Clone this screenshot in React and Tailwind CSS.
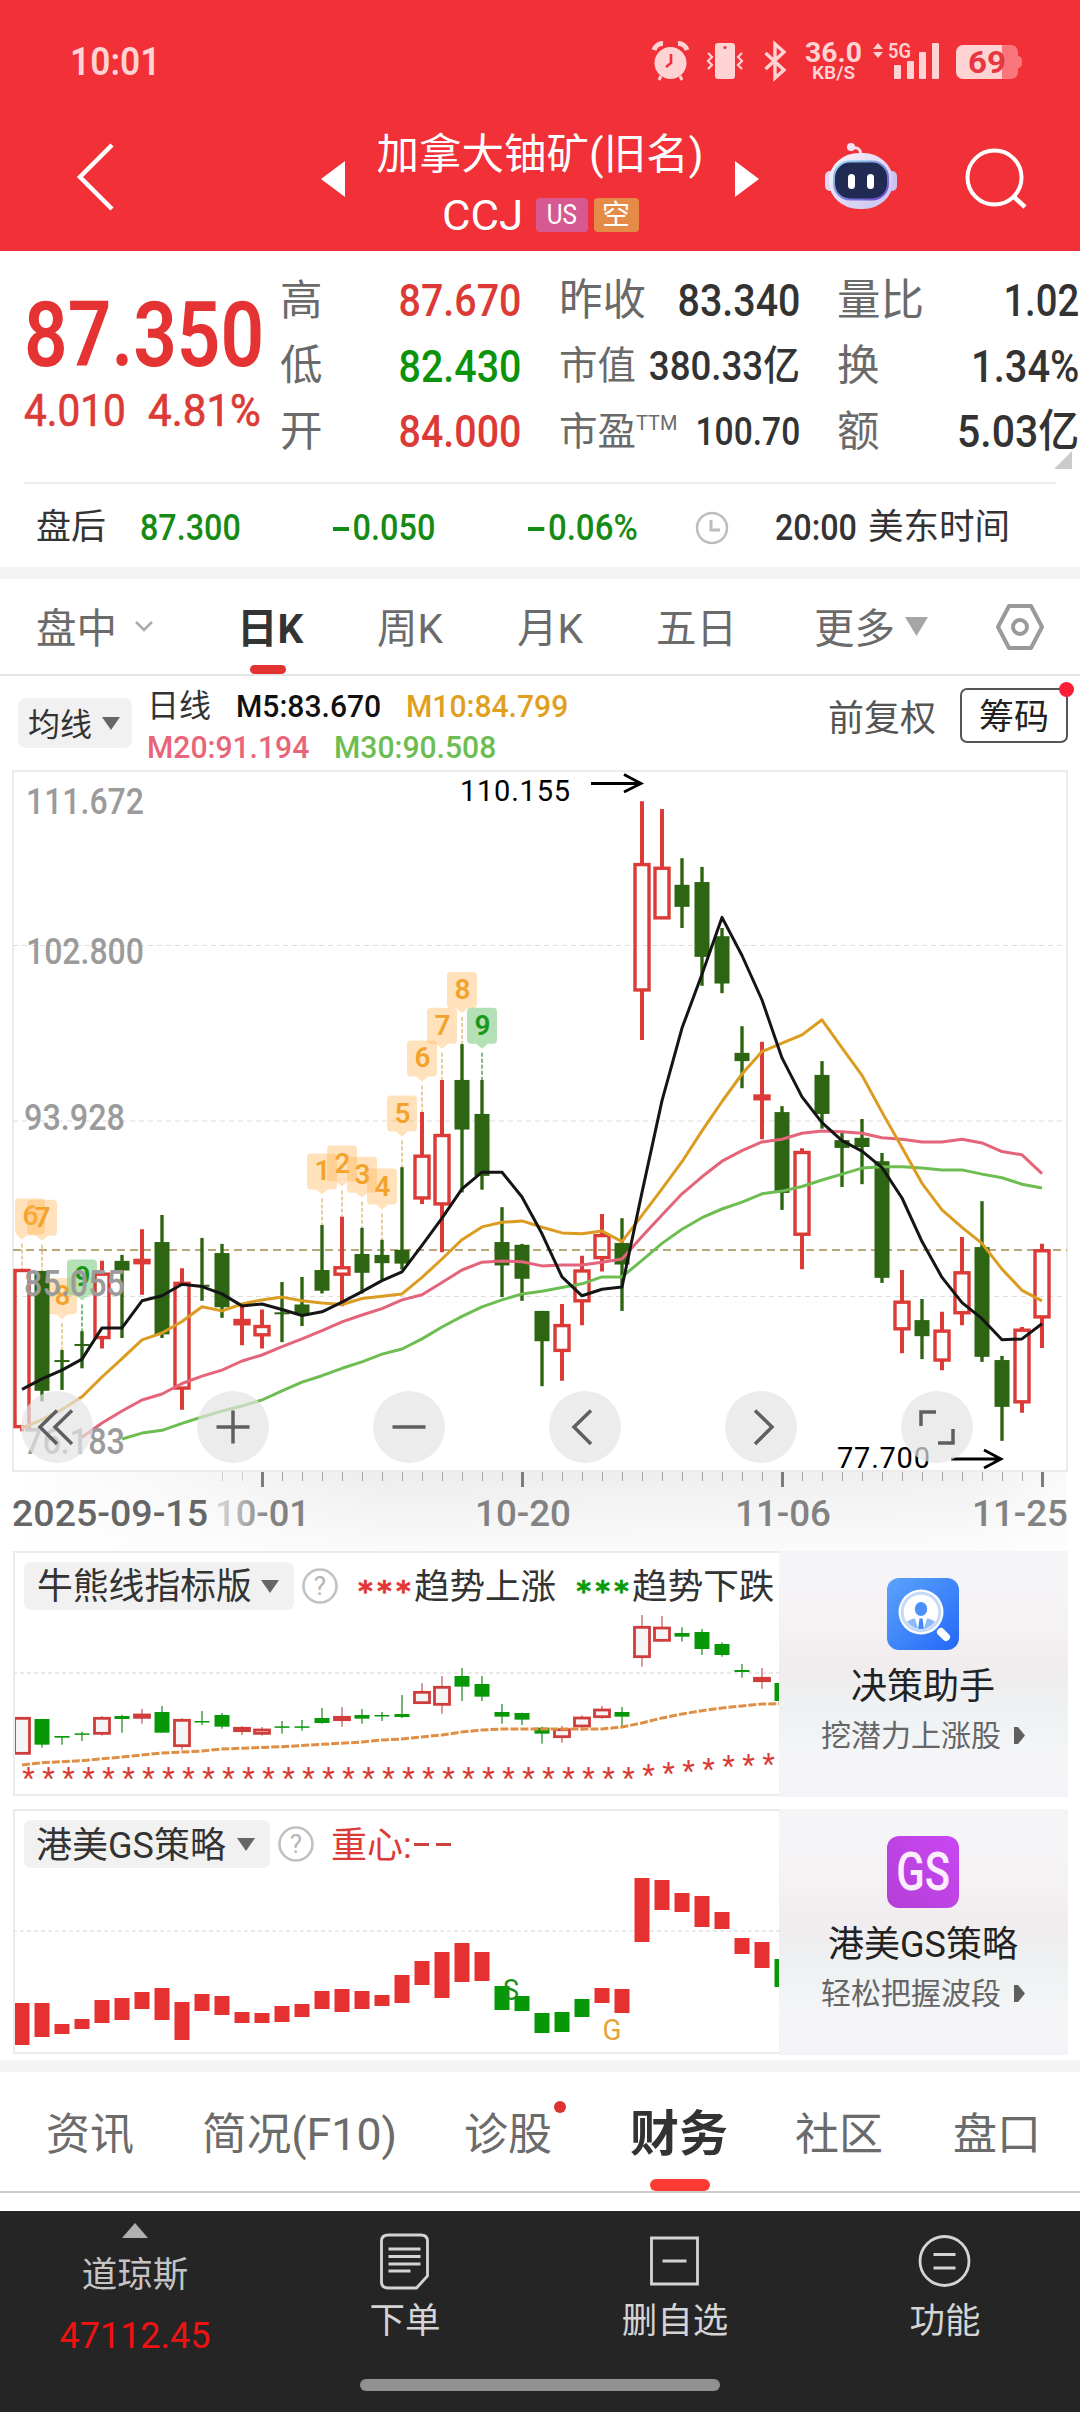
import React from "react";

const RED = "#dc3a36";
const GREEN = "#2e6512";

/* Text squeezed horizontally inside a cell whose width the caller sets. */
function Fit({ className = "", right, scale = "scale-x-[.885]", children }) {
  return (
    <div className={`flex shrink-0 whitespace-nowrap ${right ? "justify-end" : ""} ${className}`}>
      <span className={`inline-block ${right ? "origin-right" : "origin-left"} ${scale}`}>{children}</span>
    </div>
  );
}

/* ---------- header ---------- */

function StatusBar() {
  return (
    <div className="flex h-[122px] items-center text-[#ffd3d4]">
      <Fit scale="scale-x-[.93]" className="ml-[70px] w-[570px] pt-[2px] text-[38px] font-semibold">10:01</Fit>
      <svg className="shrink-0" width="400" height="48" viewBox="640 38 400 48" fill="#ffd3d4">
        <circle cx="670.5" cy="64" r="16" />
        <path d="M654 51a9 9 0 0 1 9-6.500M678 44.500a9 9 0 0 1 9 6.500" fill="none" stroke="#ffd3d4" strokeWidth="5" />
        <path d="M661 77l-2 4M680 77l2 4" stroke="#ffd3d4" strokeWidth="3" />
        <path d="M671 55v9l-5 4" fill="none" stroke="#f13038" strokeWidth="2.6" />
        <rect x="715" y="44" width="20" height="36" rx="3" />
        <circle cx="725" cy="48.500" r="1.600" fill="#f13038" />
        <path
          d="M708 54l4 4-4 4 4 4-4 4M742 54l-4 4 4 4-4 4 4 4"
          fill="none"
          stroke="#ffd3d4"
          strokeWidth="2.2"
        />
        <path d="M765.500 54l18.500 17-9 8V45l9 8-18.500 17" fill="none" stroke="#ffd3d4" strokeWidth="3.4" />
        <text x="805" y="63" fontSize="27.500" fontWeight="700" textLength="57" lengthAdjust="spacingAndGlyphs">
          36.0
        </text>
        <text x="812" y="80" fontSize="19" fontWeight="600" textLength="43" lengthAdjust="spacingAndGlyphs">
          KB/S
        </text>
        <path d="M873 50l5-6 5 6zM873 53h10l-5 6z" />
        <text x="888" y="59" fontSize="21" fontWeight="600" textLength="23" lengthAdjust="spacingAndGlyphs">
          5G
        </text>
        <rect x="894" y="66" width="7" height="14" rx="1" />
        <rect x="907" y="62" width="7" height="18" rx="1" />
        <rect x="919" y="53" width="7" height="27" rx="1" />
        <rect x="932" y="44" width="7" height="36" rx="1" />
        <path d="M1002 46h9a7 7 0 0 1 7 7v4q4 0 4 6t-4 6v4a7 7 0 0 1-7 7h-9z" fill="#f9767b" />
        <path d="M963 46h39v34h-39a7 7 0 0 1-7-7V53a7 7 0 0 1 7-7z" />
        <text x="968" y="74" fontSize="31" fontWeight="700" fill="#e5393f" textLength="38" lengthAdjust="spacingAndGlyphs">
          69
        </text>
      </svg>
    </div>
  );
}

function Robot() {
  return (
    <svg className="ml-[66px] mt-[20px] shrink-0" width="72" height="68" viewBox="825 142 72 68">
      <defs>
        <linearGradient id="shell" x1="0" y1="0" x2="1" y2="1">
          <stop offset="0" stopColor="#fdf3fb" />
          <stop offset=".5" stopColor="#e3daf4" />
          <stop offset="1" stopColor="#c3c0f0" />
        </linearGradient>
        <linearGradient id="rim" x1="0" y1="0" x2="1" y2="1">
          <stop offset="0" stopColor="#8fdcf0" />
          <stop offset="1" stopColor="#6a3fd0" />
        </linearGradient>
      </defs>
      <path d="M852 148q9-2 9 8" fill="none" stroke="#f8dcea" strokeWidth="3" />
      <circle cx="851" cy="147" r="4" fill="#f6e3f2" />
      <rect x="825" y="171" width="10" height="20" rx="5" fill="#ded6f4" />
      <rect x="887" y="171" width="10" height="20" rx="5" fill="#c9c3f0" />
      <rect x="829" y="153" width="64" height="56" rx="30" ry="27" fill="url(#shell)" />
      <rect x="834" y="161.500" width="54" height="38" rx="16" fill="#202a52" stroke="url(#rim)" strokeWidth="2" />
      <rect x="848" y="174" width="7" height="15" rx="3.500" fill="#fff" />
      <rect x="867" y="174" width="7" height="15" rx="3.500" fill="#fff" />
    </svg>
  );
}

function Header() {
  return (
    <header className="h-[251px] bg-[#f13038] text-white">
      <StatusBar />
      <div className="flex items-start">
        <svg className="ml-[74px] mt-[18px] shrink-0" width="42" height="74" viewBox="0 0 42 74">
          <path d="M38 5L6 37l32 32" fill="none" stroke="#fff" strokeWidth="4.500" />
        </svg>
        <svg className="ml-[205px] mt-[39px] shrink-0" width="24" height="36">
          <path d="M0 18L24 0v36z" fill="#fff" />
        </svg>
        <div className="flex w-[390px] shrink-0 flex-col items-center">
          <div className="h-[62px] whitespace-nowrap text-[42.500px] leading-[66px]">加拿大铀矿(旧名)</div>
          <div className="flex h-[62px] items-center">
            <Fit scale="scale-x-[1.02]" className="w-[94px] text-[43px]">CCJ</Fit>
            <span className="flex h-[34px] w-[52px] items-center justify-center rounded-[4px] bg-[#d65a91] text-[27px]">
              <span className="scale-x-[.9]">US</span>
            </span>
            <span className="ml-[6px] flex h-[34px] w-[45px] items-center justify-center rounded-[4px] bg-[#e58b47] pt-[2px] text-[28px]">
              空
            </span>
          </div>
        </div>
        <svg className="mt-[39px] shrink-0" width="24" height="36">
          <path d="M24 18L0 0v36z" fill="#fff" />
        </svg>
        <Robot />
        <svg className="ml-[68px] mt-[25px] shrink-0" width="64" height="64" viewBox="965 147 64 64">
          <circle cx="994.500" cy="177.500" r="27" fill="none" stroke="#fff" strokeWidth="4" />
          <path d="M1013 196l12 11" stroke="#fff" strokeWidth="4.500" />
        </svg>
      </div>
    </header>
  );
}

/* ---------- quote ---------- */

function Stat({ label, value, labelClass = "text-[42.500px]", valueClass = "text-[45px] text-[#333]", scale = "scale-x-[.875]" }) {
  return (
    <div className="flex h-[65.500px] items-center justify-between">
      <span className={`shrink-0 whitespace-nowrap text-[#6a6a6a] ${labelClass}`}>{label}</span>
      <Fit right scale={scale} className={`w-0 font-medium ${valueClass}`}>
        {value}
      </Fit>
    </div>
  );
}

function Quote() {
  return (
    <section className="relative flex h-[231px] bg-white">
      <div className="ml-[24px] w-[256px] shrink-0 pt-[46px]">
        <Fit scale="scale-x-[.85]" className="h-[78px] text-[90px] leading-[78px] font-semibold text-[#e53232]">
          87.350
        </Fit>
        <div className="flex h-[72px] items-center text-[45px] text-[#dc3a36]">
          <Fit scale="scale-x-[.9]" className="w-[124px] [-webkit-text-stroke:.7px]">4.010</Fit>
          <Fit scale="scale-x-[.935]" className="[-webkit-text-stroke:.7px]">4.81%</Fit>
        </div>
      </div>
      <div className="w-[241px] shrink-0 pt-[17px]">
        <Stat label="高" value="87.670" valueClass="text-[45px] text-[#dc3a36]" />
        <Stat label="低" value="82.430" valueClass="text-[45px] text-[#0c930c]" />
        <Stat label="开" value="84.000" valueClass="text-[45px] text-[#dc3a36]" />
      </div>
      <div className="ml-[38px] w-[241px] shrink-0 pt-[17px]">
        <Stat label="昨收" value="83.340" labelClass="text-[43.500px]" />
        <Stat
          label="市值"
          value="380.33亿"
          scale="scale-x-[.905]"
          labelClass="text-[38.500px]"
          valueClass="text-[40.500px] text-[#333]"
        />
        <Stat
          label={
            <span className="flex">
              市盈<span className="mt-[5px] text-[20px]">TTM</span>
            </span>
          }
          value="100.70"
          scale="scale-x-[.85]"
          labelClass="text-[38.500px]"
          valueClass="text-[39.500px] text-[#333]"
        />
      </div>
      <div className="ml-[37px] w-[242px] shrink-0 pt-[17px]">
        <Stat label="量比" value="1.02" labelClass="text-[43.500px]" scale="scale-x-[.85]" />
        <Stat label="换" value="1.34%" scale="scale-x-[.885]" />
        <Stat label="额" value="5.03亿" scale="scale-x-[.91]" />
      </div>
      <svg className="absolute right-[8px] bottom-[13px]" width="18" height="18">
        <path d="M18 0v18H0z" fill="#cbcbcb" />
      </svg>
    </section>
  );
}

function Minus() {
  return <span className="mr-[4px] mb-[9px] inline-block h-[4px] w-[18px] bg-[#158a15]" />;
}

function AfterHours() {
  return (
    <section className="mx-[24px] flex h-[85px] items-center border-t-2 border-[#ececec] bg-white pt-[5px] text-[36.500px] font-medium text-[#158a15]">
      <span className="ml-[12px] w-[104px] shrink-0 text-[35px] font-normal text-[#333]">盘后</span>
      <Fit scale="scale-x-[.885]" className="w-[193px]">87.300</Fit>
      <Fit scale="scale-x-[.89]" className="w-[195px]">
        <Minus />
        0.050
      </Fit>
      <Fit scale="scale-x-[.905]" className="w-[167px]">
        <Minus />
        0.06%
      </Fit>
      <svg className="shrink-0" width="34" height="34" viewBox="0 0 34 34" fill="none" stroke="#bdbdbd" strokeWidth="2.500">
        <circle cx="17" cy="17" r="15" />
        <path d="M16 9v10h9" strokeWidth="3" />
      </svg>
      <Fit className="ml-[46px] w-[93px] text-[#333]">20:00</Fit>
      <span className="shrink-0 text-[35.500px] font-normal text-[#333]">美东时间</span>
    </section>
  );
}

/* ---------- period tabs ---------- */

function Caret({ w = 18, h = 13, fill = "#666", className = "" }) {
  return (
    <svg className={`shrink-0 ${className}`} width={w} height={h} viewBox="0 0 18 13" preserveAspectRatio="none">
      <path d="M0 0h18L9 13z" fill={fill} />
    </svg>
  );
}

function PeriodTabs() {
  return (
    <nav className="flex h-[97px] items-center border-b-2 border-[#e6e6e6] bg-white pt-[5px] text-[40.500px] text-[#6b6b6b]">
      <span className="ml-[36px] w-[99px] shrink-0">盘中</span>
      <svg className="-mt-[7px] shrink-0" width="18" height="12" fill="none" stroke="#aaa" strokeWidth="2.500">
        <path d="M1 2l8 8 8-8" />
      </svg>
      <span className="relative ml-[84px] flex h-full w-[140px] shrink-0 items-center font-bold text-[#333]">
        日K
        <span className="absolute bottom-0 left-[13px] h-[9px] w-[36px] rounded-full bg-[#e23232]" />
      </span>
      <span className="w-[140px] shrink-0">周K</span>
      <span className="w-[139px] shrink-0">月K</span>
      <span className="w-[158px] shrink-0">五日</span>
      <span className="w-[91px] shrink-0">更多</span>
      <Caret w={23} h={19} fill="#a6a6a6" className="-mt-[5px]" />
      <svg className="-mt-[5px] ml-[67px] shrink-0" width="50" height="48" viewBox="0 0 50 48" fill="none" stroke="#9a9a9a" strokeWidth="4">
        <path d="M14 3h22l11 21-11 21H14L3 24z" strokeLinejoin="round" />
        <circle cx="25" cy="24" r="7" />
      </svg>
    </nav>
  );
}

function Averages() {
  return (
    <section className="flex h-[94px] bg-white">
      <div className="mt-[22px] ml-[18px] flex h-[50px] w-[114px] shrink-0 items-center rounded-[8px] bg-[#f1f1f1] pt-[3px] pl-[10px] text-[32px] text-[#333]">
        均线
        <Caret className="-mt-[3px] ml-[10px]" />
      </div>
      <div className="ml-[15px] w-[681px] shrink-0 pt-[10px] text-[32px] leading-[41px] font-medium">
        <div className="flex">
          <span className="w-[89px] text-[32px] font-normal text-[#333]">日线</span>
          <Fit scale="scale-x-[.94]" className="w-[170px] text-[#111]">M5:83.670</Fit>
          <Fit scale="scale-x-[.94]" className="text-[#e0a01e]">M10:84.799</Fit>
        </div>
        <div className="flex">
          <Fit scale="scale-x-[.94]" className="w-[187px] text-[#e9657a]">M20:91.194</Fit>
          <Fit scale="scale-x-[.94]" className="text-[#6dbd52]">M30:90.508</Fit>
        </div>
      </div>
      <span className="w-[132px] shrink-0 pt-[16px] text-[36px] text-[#555]">前复权</span>
      <div className="relative mt-[12px] flex h-[55px] w-[108px] shrink-0 items-center justify-center rounded-[7px] border-2 border-[#555] pt-[6px] text-[35px] text-[#222]">
        筹码
        <span className="absolute -top-[8px] -right-[8px] h-[15px] w-[15px] rounded-full bg-[#fb1e36]" />
      </div>
    </section>
  );
}

/* ---------- main candlestick chart ---------- */

const STEP = 20;
const X0 = 22;
const xAt = (i) => X0 + STEP * i;

/* [up, high, body top, body bottom, low] on the chart's own vertical scale */
const CANDLES = [
  [1, 1090, 1090, 1430, 1440], [0, 1091, 1091, 1352, 1375], [0, 1263, 1285, 1285, 1350], [0, 1222, 1250, 1250, 1303],
  [1, 1069, 1098, 1236, 1260], [0, 1056, 1069, 1090, 1237], [1, 1000, 1068, 1073, 1143], [0, 969, 1028, 1229, 1237],
  [1, 1085, 1118, 1346, 1393], [0, 1019, 1121, 1121, 1156], [0, 1032, 1052, 1170, 1193], [1, 1168, 1199, 1206, 1253],
  [1, 1175, 1212, 1230, 1260], [0, 1115, 1181, 1181, 1246], [0, 1104, 1164, 1186, 1211], [0, 991, 1089, 1134, 1140],
  [1, 973, 1084, 1098, 1168], [0, 997, 1054, 1095, 1140], [0, 1023, 1056, 1074, 1110], [0, 865, 1045, 1075, 1088],
  [1, 745, 841, 932, 945], [1, 675, 796, 945, 1050], [0, 597, 675, 783, 920], [0, 675, 749, 884, 914],
  [0, 952, 1028, 1079, 1148], [0, 1032, 1034, 1108, 1156], [0, 1178, 1178, 1244, 1342], [1, 1163, 1210, 1264, 1330],
  [1, 1058, 1091, 1156, 1209], [1, 967, 1014, 1062, 1092], [0, 976, 1030, 1077, 1178], [1, 68, 206, 479, 588],
  [1, 85, 214, 322, 322], [0, 192, 250, 298, 344], [0, 211, 244, 407, 470], [0, 344, 362, 465, 486],
  [0, 558, 616, 634, 693], [1, 592, 710, 716, 804], [0, 732, 745, 921, 958], [1, 824, 833, 1011, 1087],
  [0, 634, 664, 749, 781], [0, 786, 806, 823, 908], [0, 760, 801, 821, 902], [0, 834, 852, 1106, 1117],
  [1, 1089, 1159, 1217, 1270], [0, 1152, 1198, 1233, 1283], [1, 1180, 1222, 1285, 1307], [1, 1017, 1095, 1182, 1209],
  [0, 939, 1039, 1278, 1289], [0, 1276, 1285, 1387, 1461], [1, 1213, 1220, 1376, 1400], [1, 1032, 1047, 1191, 1259],
];

const MA5 = [1349, 1326, 1307, 1283, 1215, 1215, 1156, 1145, 1120, 1125, 1141, 1167, 1163, 1175, 1188, 1180, 1159, 1136, 1112, 1093, 1035, 976, 912, 876, 876, 930, 1010, 1104, 1145, 1131, 1126, 920, 720, 562, 445, 321, 404, 501, 627, 712, 768, 807, 830, 866, 932, 1027, 1105, 1160, 1195, 1241, 1239, 1206];
const MA10 = [1434, 1415, 1393, 1365, 1322, 1282, 1241, 1226, 1201, 1169, 1178, 1163, 1154, 1148, 1156, 1161, 1164, 1151, 1146, 1141, 1105, 1065, 1023, 995, 985, 982, 996, 1008, 1010, 1004, 1027, 970, 912, 853, 786, 722, 662, 613, 595, 577, 544, 605, 665, 745, 822, 900, 958, 996, 1031, 1087, 1133, 1156];
const MA20 = [1453, 1422, 1396, 1372, 1359, 1336, 1320, 1307, 1287, 1274, 1256, 1239, 1221, 1202, 1187, 1173, 1154, 1143, 1116, 1089, 1072, 1069, 1071, 1080, 1078, 1078, 1072, 1065, 1016, 969, 923, 886, 852, 829, 810, 804, 791, 786, 788, 791, 801, 804, 810, 810, 804, 812, 831, 838, 879];
const MA30 = [1457, 1444, 1438, 1423, 1409, 1396, 1385, 1372, 1352, 1333, 1319, 1303, 1289, 1272, 1261, 1239, 1213, 1190, 1169, 1154, 1141, 1135, 1127, 1119, 1104, 1104, 1068, 1031, 1000, 975, 956, 941, 923, 917, 907, 893, 880, 867, 864, 864, 867, 871, 871, 880, 888, 902, 910];

/* [candle, top, digit, x shift] */
const TAGS = [
  [0, 933, "6", 8], [1, 936, "7", 0], [2, 1107, "8", 0], [3, 1066, "9", 0], [15, 835, "1", 0], [16, 818, "2", 0],
  [17, 842, "3", 0], [18, 868, "4", 0], [19, 709, "5", 0], [20, 589, "6", 0], [21, 518, "7", 0], [22, 440, "8", 0],
  [23, 518, "9", 0],
];

const Y = (v) => 770 + v * 0.45918;
const line = (values, first = 0) => values.map((v, i) => `${xAt(i + first)},${Y(v).toFixed(1)}`).join(" ");

function Candle({ i, c }) {
  const [up, hi, top, bot, lo] = c;
  const x = xAt(i);
  if (up) {
    return (
      <g stroke={RED} fill="none">
        <path d={`M${x} ${Y(hi)}V${Y(top)}M${x} ${Y(bot)}V${Y(lo)}`} strokeWidth="4" />
        <rect x={x - 7} y={Y(top)} width="14" height={Math.max(Y(bot) - Y(top), 1)} strokeWidth="3.400" />
      </g>
    );
  }
  return (
    <g fill={GREEN}>
      <rect x={x - 1.7} y={Y(hi)} width="3.400" height={Y(lo) - Y(hi)} />
      <rect x={x - 7.5} y={Y(top)} width="15" height={Math.max(Y(bot) - Y(top), 2)} />
    </g>
  );
}

function Tag({ t }) {
  const [i, top, n, dx] = t;
  const x = xAt(i);
  const y = Y(top);
  const green = n === "9";
  return (
    <g>
      <path
        d={`M${x} ${y + 45}V${Y(CANDLES[i][1])}`}
        stroke={green ? "#7fb884" : "#e6cd9c"}
        strokeWidth="2"
        strokeDasharray="4 2"
      />
      <rect x={x + dx - 15} y={y} width="30" height="36" rx="4" fill={green ? "#74c878" : "#ffb450"} opacity={green ? 0.55 : 0.38} />
      <path d={`M${x - 6} ${y + 36}h12l-6 5z`} fill={green ? "#74c878" : "#ffb450"} opacity={green ? 0.55 : 0.38} />
      <text x={x + dx + 0.5} y={y + 27} fontSize="28" fontWeight="600" textAnchor="middle" fill={green ? "#1a961a" : "#f3a32c"}>
        {n}
      </text>
    </g>
  );
}

function AxisLabel({ x, y, w, fill = "#9b9b9b", children }) {
  return (
    <text x={x} y={y} fontSize="36" fontWeight="500" fill={fill} textLength={w} lengthAdjust="spacingAndGlyphs">
      {children}
    </text>
  );
}

function RoundButton({ children }) {
  return (
    <div className="flex h-[72px] w-[72px] items-center justify-center rounded-full bg-[#e4e4e4]/70">
      <svg width="40" height="40" viewBox="0 0 40 40" fill="none" stroke="#5f5f5f" strokeWidth="3.500">
        {children}
      </svg>
    </div>
  );
}

function MainChart() {
  const ticks = Array.from({ length: 42 }, (_, k) => k + 10);
  return (
    <section className="relative h-[781px]">
      <svg className="block" width="1080" height="781" viewBox="0 770 1080 781">
        <defs>
          <linearGradient id="axisH" x1="0" x2="1">
            <stop offset="0" stopColor="#efefef" stopOpacity="0" />
            <stop offset=".35" stopColor="#ededed" />
            <stop offset=".9" stopColor="#f0f0f0" />
            <stop offset="1" stopColor="#fafafa" />
          </linearGradient>
          <linearGradient id="axisV" x1="0" y1="0" x2="0" y2="1">
            <stop offset="0" stopColor="#fff" stopOpacity="0" />
            <stop offset="1" stopColor="#fff" stopOpacity=".75" />
          </linearGradient>
          <linearGradient id="fade" gradientUnits="userSpaceOnUse" x1="215" x2="270" y1="0" y2="0">
            <stop offset="0" stopColor="#dcdcdc" />
            <stop offset="1" stopColor="#828282" />
          </linearGradient>
        </defs>
        <rect x="13" y="1472" width="1054" height="79" fill="url(#axisH)" />
        <rect x="13" y="1472" width="1054" height="79" fill="url(#axisV)" />
        <rect x="13" y="771" width="1054" height="700" fill="#fff" stroke="#ebebeb" strokeWidth="2" />
        <g stroke="#dedede" strokeDasharray="5 4">
          <path d="M13 945.500H1067M13 1121H1067M13 1296.500H1067" />
        </g>
        <path d="M13 1250H1067" stroke="#b9a67a" strokeWidth="2" strokeDasharray="8 5" />
        {TAGS.map((t) => (
          <Tag key={t[0]} t={t} />
        ))}
        {CANDLES.map((c, i) => (
          <Candle key={i} i={i} c={c} />
        ))}
        <g fill="none" strokeWidth="3" strokeLinejoin="round">
          <polyline points={line(MA30, 5)} stroke="#6dbd52" />
          <polyline points={line(MA20, 3)} stroke="#e4647a" />
          <polyline points={line(MA10)} stroke="#dc9c22" />
          <polyline points={line(MA5)} stroke="#151515" />
        </g>
        <AxisLabel x="26" y="813.500" w="118">111.672</AxisLabel>
        <AxisLabel x="26" y="963.500" w="118">102.800</AxisLabel>
        <AxisLabel x="24" y="1129.500" w="101">93.928</AxisLabel>
        <AxisLabel x="24" y="1296" w="101">85.055</AxisLabel>
        <AxisLabel x="24" y="1454" w="101">76.183</AxisLabel>
        <g fontSize="29" fill="#000">
          <text x="460" y="801" textLength="110">110.155</text>
          <text x="837" y="1468" textLength="93">77.700</text>
        </g>
        <g fill="none" stroke="#000" strokeWidth="2.800">
          <path d="M591 783.500h50M624 774.500l17 9-17 8.500" />
          <path d="M951 1459h50M984 1450l17 9-17 9" />
        </g>
        {ticks.map((k) => {
          const major = k === 12 || k === 25 || k === 38 || k === 51;
          return (
            <path
              key={k}
              d={`M${xAt(k) + 0.5} 1472v${major ? 15 : 9}`}
              stroke={k < 12 ? "#cfcfcf" : major ? "#7d7d7d" : "#a5a5a5"}
              strokeWidth={major ? 3 : 1}
            />
          );
        })}
        <AxisLabel x="12" y="1525.500" w="196" fill="#666">2025-09-15</AxisLabel>
        <AxisLabel x="215" y="1525.500" w="95" fill="url(#fade)">10-01</AxisLabel>
        <AxisLabel x="475" y="1525.500" w="96" fill="#828282">10-20</AxisLabel>
        <AxisLabel x="735" y="1525.500" w="96" fill="#828282">11-06</AxisLabel>
        <AxisLabel x="972" y="1525.500" w="96" fill="#828282">11-25</AxisLabel>
      </svg>
      <div className="absolute top-[621px] left-[21px] flex gap-[104px]">
        <RoundButton><path d="M20 3.500L3 20l17 17M35 3.500L18 20l17 17" /></RoundButton>
        <RoundButton><path d="M3.500 20h33M20 3.500v33" /></RoundButton>
        <RoundButton><path d="M3.500 20h33" /></RoundButton>
        <RoundButton><path d="M26 3.500L9 20l17 17" /></RoundButton>
        <RoundButton><path d="M14 3.500L31 20 14 37" /></RoundButton>
        <RoundButton><path d="M4 19V5h15M36 22v14H21" /></RoundButton>
      </div>
    </section>
  );
}

/* ---------- indicator panels ---------- */

const TREND = [
  [1, 535, 535, 640, 640], [0, 537, 537, 614, 623], [0, 588, 588, 593, 614], [0, 575, 580, 584, 603], [1, 528, 535, 580, 587],
  [0, 524, 528, 537, 578], [1, 507, 525, 532, 551], [0, 498, 516, 578, 578], [1, 535, 541, 617, 629], [0, 513, 543, 545, 555],
  [0, 519, 525, 560, 566], [1, 558, 565, 572, 585], [1, 561, 570, 580, 587], [0, 543, 559, 563, 581], [0, 540, 559, 563, 572],
  [0, 504, 534, 549, 551], [1, 501, 532, 539, 560], [0, 507, 525, 536, 551], [0, 516, 525, 529, 543], [0, 465, 522, 531, 534],
  [1, 430, 457, 488, 491], [1, 408, 442, 493, 521], [0, 384, 408, 440, 483], [0, 408, 432, 470, 483], [0, 492, 516, 530, 551],
  [0, 518, 519, 539, 555], [0, 560, 563, 581, 611], [1, 558, 569, 590, 608], [1, 526, 534, 558, 572], [1, 498, 510, 530, 536],
  [0, 501, 516, 530, 560], [1, 225, 262, 350, 380], [1, 228, 264, 301, 303], [0, 262, 279, 290, 305], [0, 267, 276, 327, 345],
  [0, 307, 312, 345, 350], [0, 372, 390, 396, 413], [1, 384, 415, 422, 446], [0, 429, 429, 483, 483],
];
const TREND_LINE = [[0, 675], [1, 668], [3, 662], [5, 651], [7, 639], [9, 633], [10, 627], [13, 620], [15, 613], [17, 606], [18, 600], [19, 597], [20, 591], [21, 585], [22, 576], [23, 570], [24, 567], [29, 567], [30, 561], [31, 549], [32, 534], [33, 522], [34, 512], [35, 504], [36, 498], [37, 492], [38, 491]];
const STAR_TAIL = [692, 685, 678, 672, 665, 660, 657];

const BARS = [
  [609, 735], [609, 711], [672, 702], [657, 687], [600, 669], [594, 660], [576, 627], [564, 660], [606, 720], [582, 633],
  [588, 645], [636, 669], [639, 669], [618, 666], [612, 651], [573, 627], [567, 636], [573, 627], [585, 618], [525, 609],
  [483, 555], [456, 594], [429, 546], [456, 543], [558, 630], [588, 633], [639, 699], [636, 696], [597, 651], [564, 609],
  [567, 639], [234, 426], [240, 330], [279, 336], [288, 381], [336, 387], [414, 462], [426, 504], [477, 561],
];
const GREEN_BARS = [24, 25, 26, 27, 28, 38];

function HelpMark({ className = "" }) {
  return (
    <svg className={`shrink-0 ${className}`} width="36" height="36" viewBox="0 0 36 36">
      <circle cx="18" cy="18" r="16.500" fill="none" stroke="#c2c2c2" strokeWidth="2.600" />
      <text x="18" y="27" fontSize="26" textAnchor="middle" fill="#b5b5b5">
        ?
      </text>
    </svg>
  );
}

function PromoCard({ icon, title, text }) {
  return (
    <div className="relative flex h-[246px] w-[289px] shrink-0 flex-col items-center bg-[linear-gradient(180deg,#f5f5f7_0%,#f5f2f4_30%,#f1ecee_47%,#eef0f1_60%,#eff3f4_70%,#f4f5f7_82%,#f5f3f7_100%)] pt-[27px] pr-[1px]">
      {icon}
      <div className="mt-[10px] h-[50px] text-[36px] leading-[54px] text-[#222]">{title}</div>
      <div className="flex h-[50px] items-center text-[30px] text-[#666]">
        {text}
        <svg className="ml-[13px]" width="11" height="17">
          <path d="M0 0l4 0 7 8.500-7 8.500H0z" fill="#5f5f5f" />
        </svg>
      </div>
    </div>
  );
}

function AssistantIcon() {
  return (
    <svg className="shrink-0" width="72" height="72" viewBox="0 0 72 72">
      <defs>
        <linearGradient id="blue" x1="0" y1="0" x2="1" y2="1">
          <stop offset="0" stopColor="#5ba4fb" />
          <stop offset="1" stopColor="#2468f8" />
        </linearGradient>
        <clipPath id="lens">
          <circle cx="34" cy="34" r="17" />
        </clipPath>
      </defs>
      <rect width="72" height="72" rx="12" fill="url(#blue)" />
      <path d="M54 54l5 5" stroke="#fff" strokeWidth="8" strokeLinecap="round" />
      <circle cx="34" cy="34" r="22.500" fill="#fff" />
      <circle cx="34" cy="34" r="18.800" fill="#fff" stroke="#c5dafb" strokeWidth="3" />
      <g clipPath="url(#lens)">
        <path d="M18 52v-7q6-4.500 10-4.500l3.500 12zM50 52v-7q-6-4.500-10-4.500L36.500 52z" fill="#8fbafa" />
        <path d="M32.500 40.500h3l1.500 11h-6z" fill="#4489f7" />
      </g>
      <ellipse cx="34" cy="31" rx="6.200" ry="7" fill="#4b90f8" />
    </svg>
  );
}

function GsIcon() {
  return (
    <div className="flex h-[72px] w-[72px] shrink-0 items-center justify-center rounded-[12px] bg-linear-to-tr from-[#b33fd6] to-[#c947f4] pt-[2px] text-[53px] font-medium text-[#fdeeff]">
      <span className="scale-x-[.79]">GS</span>
    </div>
  );
}

function Stars({ className }) {
  return (
    <span className={`mt-[12px] font-['DejaVu_Sans_Mono'] text-[28px] font-bold tracking-[2.100px] [-webkit-text-stroke:.6px] ${className}`}>
      ***
    </span>
  );
}

function Panel({ chart, head, card }) {
  return (
    <section className="ml-[13px] flex h-[246px]">
      <div className="relative h-[245px] w-[766px] shrink-0 overflow-hidden border-2 border-r-0 border-[#ebebeb] bg-white">
        {chart}
        <div className="relative mt-[9px] ml-[9px] flex h-[48px] items-center whitespace-nowrap text-[36px] text-[#333]">
          {head}
        </div>
      </div>
      {card}
    </section>
  );
}

function TrendChart() {
  const y = (v) => v / 3 + 1540;
  return (
    <svg className="absolute -top-[2px] -left-[2px]" width="766" height="245" viewBox="13 1551 766 245">
      <path d="M13 1673H779" stroke="#e9e9e9" strokeWidth="2" strokeDasharray="4 3" />
      {TREND.map(([up, hi, top, bot, lo], i) =>
        up ? (
          <g key={i}>
            <rect x={xAt(i) - 1} y={y(hi)} width="2" height={y(lo) - y(hi)} fill="#d89a98" />
            <rect x={xAt(i) - 7.5} y={y(top)} width="15" height={y(bot) - y(top)} fill="#f6f4f4" stroke="#d03c3c" strokeWidth="2.800" />
          </g>
        ) : (
          <g key={i} fill="#069806">
            <rect x={xAt(i) - 1} y={y(hi)} width="2" height={y(lo) - y(hi)} fill="#76b576" />
            <rect x={xAt(i) - 7.5} y={y(top)} width="15" height={Math.max(y(bot) - y(top), 1.5)} />
          </g>
        ),
      )}
      <polyline
        points={TREND_LINE.map(([i, v]) => `${xAt(i)},${y(v)}`).join(" ")}
        fill="none"
        stroke="#df8f45"
        strokeWidth="3"
        strokeDasharray="8 2"
      />
      <g fontSize="29" fill={RED} textAnchor="middle">
        {Array.from({ length: 38 }, (_, i) => (
          <text key={i} x={28.4 + 20 * i} y={y(i < 31 ? 699 : STAR_TAIL[i - 31]) + 14.5}>
            *
          </text>
        ))}
      </g>
    </svg>
  );
}

function GsChart() {
  const y = (v) => v / 3 + 1800;
  return (
    <svg className="absolute -top-[2px] -left-[2px]" width="766" height="245" viewBox="13 1809 766 245">
      <path d="M13 1931H779" stroke="#e9e9e9" strokeWidth="2" strokeDasharray="4 3" />
      {BARS.map(([top, bot], i) => (
        <rect key={i} x={xAt(i) - 7.5} y={y(top)} width="15" height={y(bot) - y(top)} fill={GREEN_BARS.includes(i) ? "#069806" : "#e63131"} />
      ))}
      <text x="511" y="2000" fontSize="30" textAnchor="middle" fill="#1a8f1a" textLength="16" lengthAdjust="spacingAndGlyphs">
        S
      </text>
      <text x="612" y="2040" fontSize="30" textAnchor="middle" fill="#e6a23a" textLength="19" lengthAdjust="spacingAndGlyphs">
        G
      </text>
    </svg>
  );
}

function Panels() {
  return (
    <>
      <Panel
        chart={<TrendChart />}
        head={
          <>
            <div className="flex h-full w-[270px] shrink-0 items-center rounded-[7px] bg-[#f1f1f1] pl-[13px]">
              <span className="pt-[3px] text-[35.800px]">牛熊线指标版</span>
              <Caret className="ml-[9px]" />
            </div>
            <HelpMark className="ml-[8px]" />
            <Stars className="ml-[19px] text-[#e23636]" />
            <span className="pt-[3px] text-[35.600px]">趋势上涨</span>
            <Stars className="ml-[19px] text-[#0a9a0a]" />
            <span className="pt-[3px] text-[35.600px]">趋势下跌</span>
          </>
        }
        card={<PromoCard icon={<AssistantIcon />} title="决策助手" text="挖潜力上涨股" />}
      />
      <div className="h-[12px]" />
      <Panel
        chart={<GsChart />}
        head={
          <>
            <div className="flex h-full w-[246px] shrink-0 items-center rounded-[7px] bg-[#f1f1f1] pl-[12px]">
              <span className="w-[192px] pt-[3px]">港美GS策略</span>
              <Caret className="ml-[9px]" />
            </div>
            <HelpMark className="ml-[8px]" />
            <span className="ml-[17px] pt-[3px] text-[#dc3a36]">重心:</span>
            <span className="ml-[2px] flex gap-[7px]">
              <span className="h-[3px] w-[15px] bg-[#c94440]" />
              <span className="h-[3px] w-[15px] bg-[#c94440]" />
            </span>
          </>
        }
        card={<PromoCard icon={<GsIcon />} title="港美GS策略" text="轻松把握波段" />}
      />
    </>
  );
}

/* ---------- bottom ---------- */

function SectionTabs() {
  return (
    <nav className="flex h-[121px] items-center border-b-2 border-[#cbcbcb] pt-[7px] text-[44px] text-[#6b6b6b]">
      <span className="ml-[46px] w-[156px] shrink-0">资讯</span>
      <Fit scale="scale-x-[1.015]" className="w-[262px]">简况(F10)</Fit>
      <span className="relative w-[166px] shrink-0">
        诊股
        <span className="absolute -top-[1px] left-[90px] h-[12px] w-[12px] rounded-full bg-[#de3232]" />
      </span>
      <span className="relative flex h-full w-[165px] shrink-0 items-center text-[49px] font-bold text-[#333]">
        财务
        <span className="absolute bottom-0 left-[20px] h-[12px] w-[60px] rounded-full bg-[#fb3b31]" />
      </span>
      <span className="w-[158px] shrink-0">社区</span>
      <span className="shrink-0">盘口</span>
    </nav>
  );
}

function NavItem({ label, children }) {
  return (
    <div className="flex w-[270px] flex-col items-center pt-[20px]">
      <svg width="60" height="60" viewBox="0.500 0 60 60" fill="none" stroke="#d4d4d4" strokeWidth="2.800">
        {children}
      </svg>
      <span className="mt-[4px] text-[35.500px] leading-[52px] text-[#d4d4d4]">{label}</span>
    </div>
  );
}

function BottomNav() {
  return (
    <footer className="relative flex h-[201px] bg-[#252525]">
      <div className="flex w-[270px] flex-col items-center pt-[12px]">
        <svg width="26" height="15">
          <path d="M0 15L13 0l13 15z" fill="#b0b0b0" />
        </svg>
        <span className="mt-[11px] text-[35.500px] leading-[53px] text-[#c4c4c4]">道琼斯</span>
        <span className="mt-[7px] text-[36px] leading-[54px] text-[#f01212]">47112.45</span>
      </div>
      <NavItem label="下单">
        <path d="M14 4h32q7 0 7 6v35l-11 12H14q-7 0-7-6V10q0-6 7-6zM14 18h32M14 25.500h32M14 33h32M14 40h22" />
      </NavItem>
      <NavItem label="删自选">
        <path d="M7 7h46v46H7zM18 30h24" />
      </NavItem>
      <NavItem label="功能">
        <circle cx="30" cy="30" r="24.500" />
        <path d="M19 23.500h22M19 37h22" />
      </NavItem>
      <div className="absolute bottom-[21px] left-[360px] h-[12px] w-[360px] rounded-full bg-[#919191]" />
    </footer>
  );
}

export default function App() {
  return (
    <div className="w-[1080px] overflow-hidden bg-white font-['Roboto','Noto_Sans_CJK_SC',sans-serif] leading-normal">
      <Header />
      <Quote />
      <AfterHours />
      <div className="h-[12px] bg-[#f4f4f4]" />
      <PeriodTabs />
      <Averages />
      <MainChart />
      <Panels />
      <div className="mt-[5px] h-[12px] bg-[#f4f4f4]" />
      <SectionTabs />
      <div className="h-[18px]" />
      <BottomNav />
    </div>
  );
}
